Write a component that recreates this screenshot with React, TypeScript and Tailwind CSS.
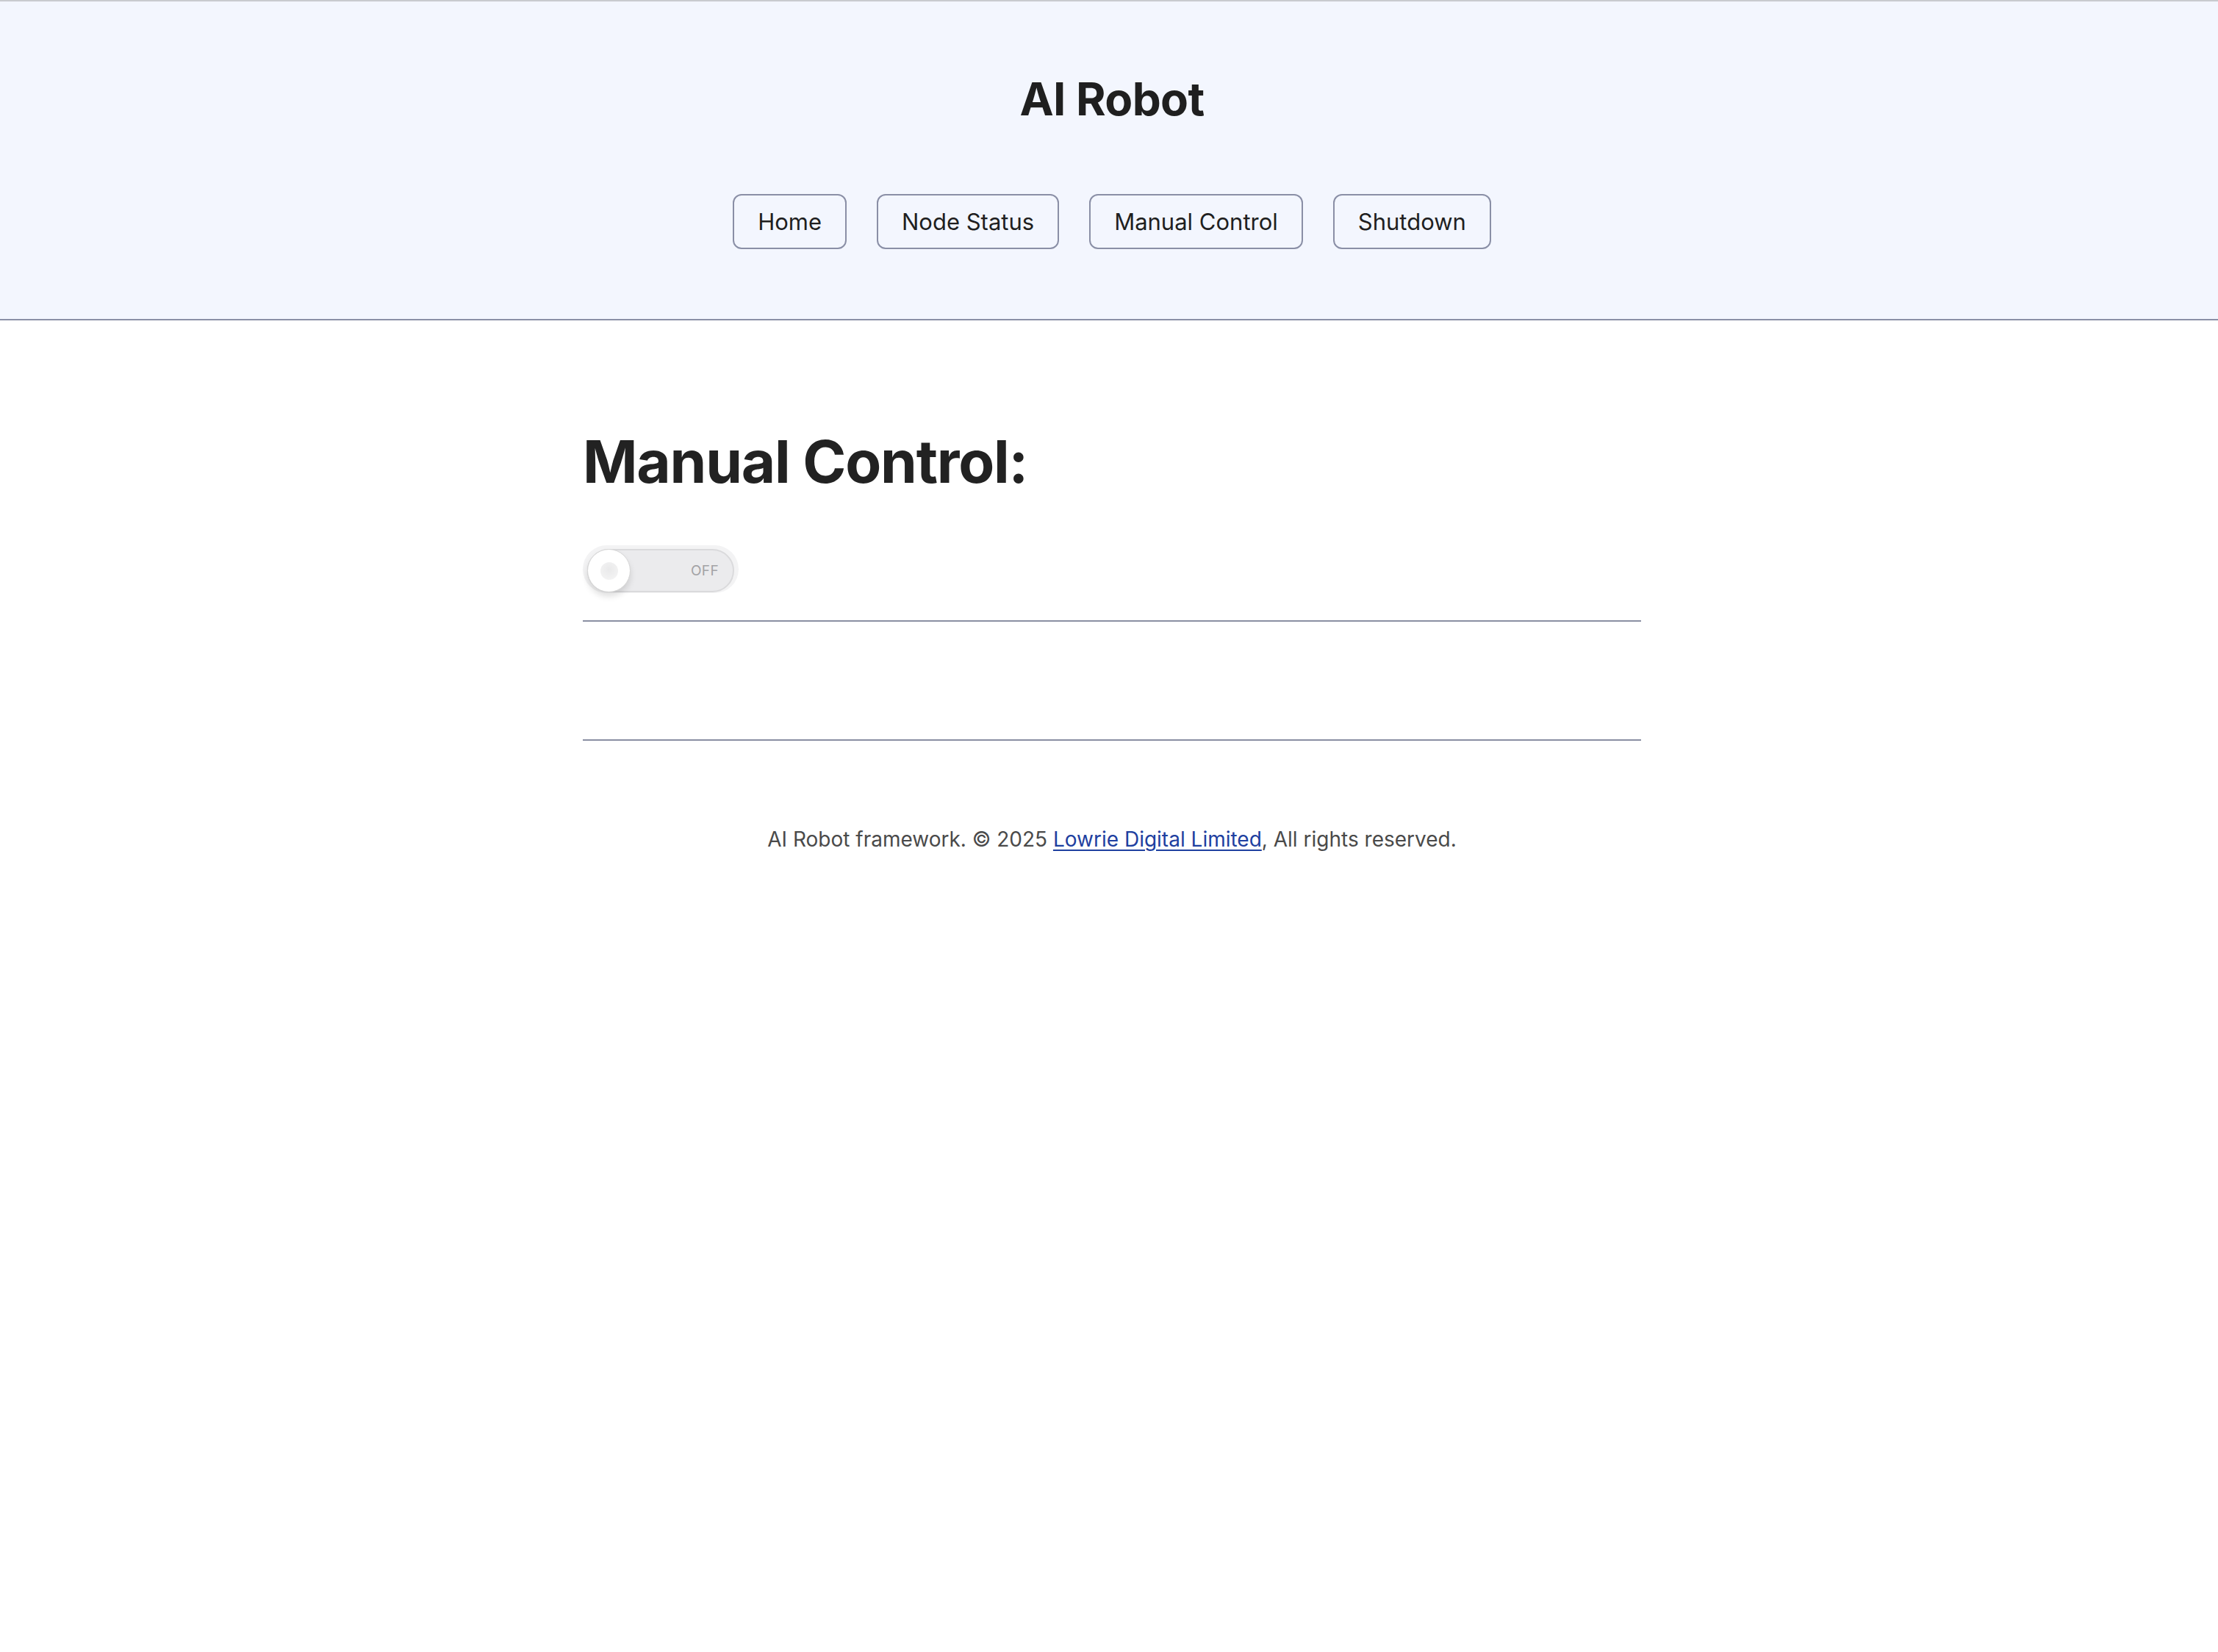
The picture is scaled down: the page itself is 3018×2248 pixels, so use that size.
const navItems = ['Home', 'Node Status', 'Manual Control', 'Shutdown']

function Toggle() {
  return (
    <div className="inline-flex rounded-full bg-[#f3f3f4] px-[6px] pt-[5px] pb-[1px]">
      <div className="relative flex h-[59px] w-[200px] items-center rounded-full border-2 border-[#dadadc] bg-[#ebebed]">
        <div className="absolute left-[-2px] top-[-2px] flex h-[59px] w-[59px] items-center justify-center rounded-full border border-[#d6d6d6] bg-white shadow-[0_6px_8px_rgba(0,0,0,0.12)]">
          <div className="h-[24px] w-[24px] rounded-full bg-[radial-gradient(circle_at_50%_40%,#e9e9ea,#f6f6f6)]" />
        </div>
        <span className="ml-auto mr-[19px] text-[19px] leading-none tracking-[0.02em] text-[#a3a3a6]">OFF</span>
      </div>
    </div>
  )
}

export default function App() {
  return (
    <div className="min-h-screen bg-white font-['Inter','Liberation_Sans',sans-serif] text-[#1f1f1f]">
      <header className="border-t-2 border-b-2 border-t-[#c8cacf] border-b-[#8a8fa6] bg-[#f3f6fe] pt-[96px] pb-[95px] pl-[8px]">
        <h1 className="text-center text-[62px] font-bold leading-[1.2] tracking-[-0.01em] text-[#1f1f1f]">
          AI Robot
        </h1>
        <nav className="mt-[92px] flex justify-center gap-[41px]">
          {navItems.map((item) => (
            <button
              key={item}
              className="h-[75px] rounded-[12px] border-2 border-[#8a8fa6] px-[32px] text-[31px] text-[#1f1f1f]"
            >
              {item}
            </button>
          ))}
        </nav>
      </header>

      <div className="pl-[8px]">
        <main className="mx-auto w-[1440px] pt-[144px]">
          <h2 className="text-[80px] font-bold leading-[1.2] tracking-[-0.015em] text-[#222]">
            Manual Control:
          </h2>
          <div className="mt-[66px]">
            <Toggle />
          </div>
          <hr className="mt-[37px] border-t-2 border-[#8a8fa3]" />
          <hr className="mt-[160px] border-t-2 border-[#8a8fa3]" />
          <footer className="mt-[113px] text-center text-[28px] leading-[1.5] text-[#4a4a4a]">
            AI Robot framework. © 2025{' '}
            <a href="#" className="text-[#1e40a0] underline underline-offset-[4px]">
              Lowrie Digital Limited
            </a>
            , All rights reserved.
          </footer>
        </main>
      </div>
    </div>
  )
}
